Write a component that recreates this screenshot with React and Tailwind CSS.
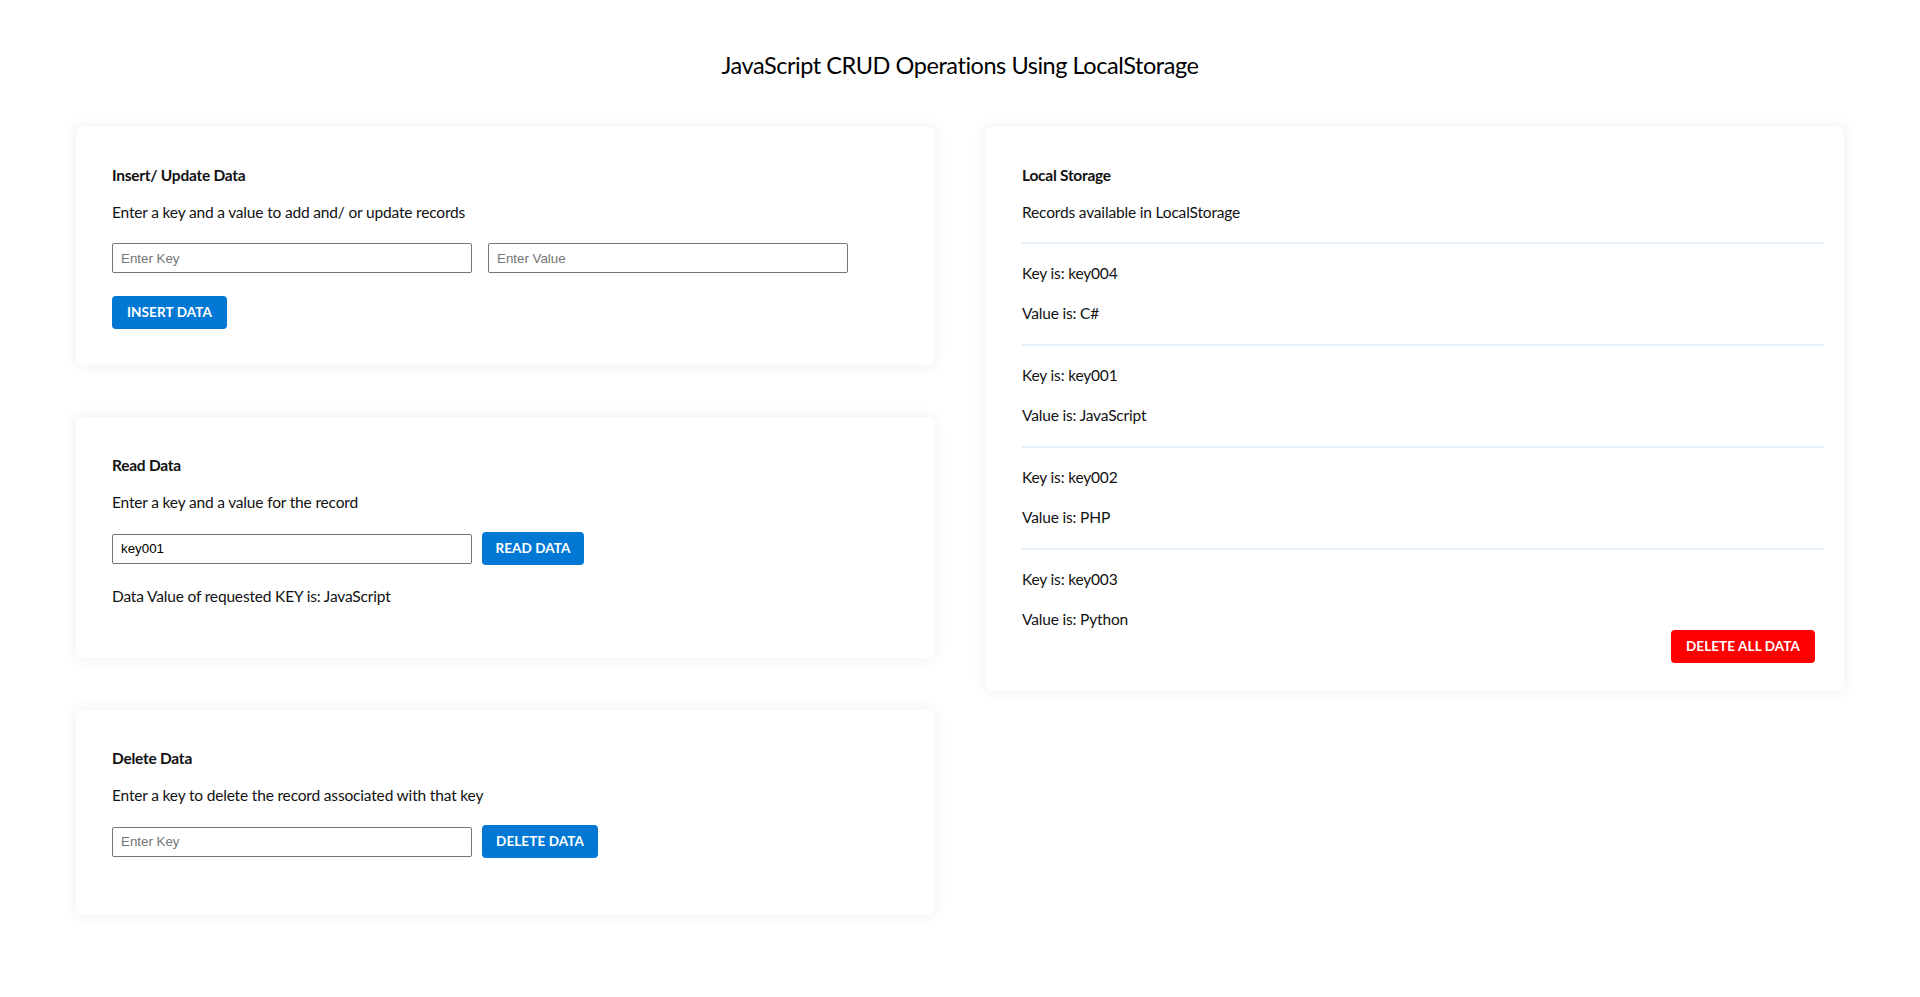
import React from "react";

const records = [
  { k: "key004", v: "C#" },
  { k: "key001", v: "JavaScript" },
  { k: "key002", v: "PHP" },
  { k: "key003", v: "Python" },
];

const card =
  "bg-white rounded-[6px] shadow-[0_0_14px_2px_rgba(0,0,0,0.055)]";
const heading =
  "text-[15.5px] leading-[24px] font-bold text-[#111] tracking-[-0.25px]";
const desc =
  "text-[15.5px] leading-[24px] text-[#111] tracking-[-0.17px]";
const input =
  "h-[30px] w-[360px] border border-[#767676] rounded-[2px] px-[8px] text-[13.33px] text-black placeholder:text-[#757575] outline-none";
const btn =
  "h-[33px] rounded-[4px] text-white text-[13.5px] font-bold tracking-[0.1px] flex items-center justify-center uppercase";

export default function App() {
  return (
    <div
      className="min-h-screen bg-white px-[76px] text-[#111]"
      style={{ fontFamily: "Lato, 'Open Sans', sans-serif" }}
    >
      <h1 className="pt-[49px] text-center text-[23.5px] leading-[32px] font-normal text-black tracking-[-0.45px]">
        JavaScript CRUD Operations Using LocalStorage
      </h1>
      <div className="mt-[46px] grid grid-cols-2 gap-x-[52px] items-start">
        <div className="flex flex-col gap-[52px]">
          <div className={`${card} px-[36px] pt-[36px] pb-[36px]`}>
            <h2 className={heading}>Insert/ Update Data</h2>
            <p className={`${desc} mt-[13px]`}>
              Enter a key and a value to add and/ or update records
            </p>
            <div className="mt-[19px] flex gap-[16px]">
              <input
                className={input}
                style={{ fontFamily: "'Liberation Sans', Arial, sans-serif" }}
                placeholder="Enter Key"
              />
              <input
                className={input}
                style={{ fontFamily: "'Liberation Sans', Arial, sans-serif" }}
                placeholder="Enter Value"
              />
            </div>
            <button className={`${btn} mt-[23px] w-[115px] bg-[#0078d4]`}>
              Insert Data
            </button>
          </div>

          <div className={`${card} px-[36px] pt-[36px] pb-[50px]`}>
            <h2 className={heading}>Read Data</h2>
            <p className={`${desc} mt-[13px]`}>
              Enter a key and a value for the record
            </p>
            <div className="mt-[18px] flex items-center gap-[10px]">
              <input
                className={input}
                style={{ fontFamily: "'Liberation Sans', Arial, sans-serif" }}
                defaultValue="key001"
              />
              <button className={`${btn} w-[102px] bg-[#0078d4]`}>
                Read Data
              </button>
            </div>
            <p className={`${desc} mt-[19px]`}>
              Data Value of requested KEY is: JavaScript
            </p>
          </div>

          <div className={`${card} px-[36px] pt-[36px] pb-[57px]`}>
            <h2 className={heading}>Delete Data</h2>
            <p className={`${desc} mt-[13px]`}>
              Enter a key to delete the record associated with that key
            </p>
            <div className="mt-[18px] flex items-center gap-[10px]">
              <input
                className={input}
                style={{ fontFamily: "'Liberation Sans', Arial, sans-serif" }}
                placeholder="Enter Key"
              />
              <button className={`${btn} w-[116px] bg-[#0078d4]`}>
                Delete Data
              </button>
            </div>
          </div>
        </div>

        <div className={`${card} pl-[36px] pr-[20px] pt-[36px] pb-[28px]`}>
          <h2 className={heading}>Local Storage</h2>
          <p className={`${desc} mt-[13px]`}>Records available in LocalStorage</p>
          <div className="mt-[18px]">
            {records.map((r, i) => (
              <div key={r.k}>
                <div className="h-[2px] bg-[#e6eef6]" />
                <p className={`${desc} mt-[17px]`}>Key is: {r.k}</p>
                <p className={`${desc} mt-[16px]`}>Value is: {r.v}</p>
                {i < records.length - 1 && <div className="h-[19px]" />}
              </div>
            ))}
          </div>
          <div className="-mt-[1px] flex justify-end pr-[9px]">
            <button className={`${btn} w-[144px] bg-[#ff0000]`}>
              Delete All Data
            </button>
          </div>
        </div>
      </div>
    </div>
  );
}
